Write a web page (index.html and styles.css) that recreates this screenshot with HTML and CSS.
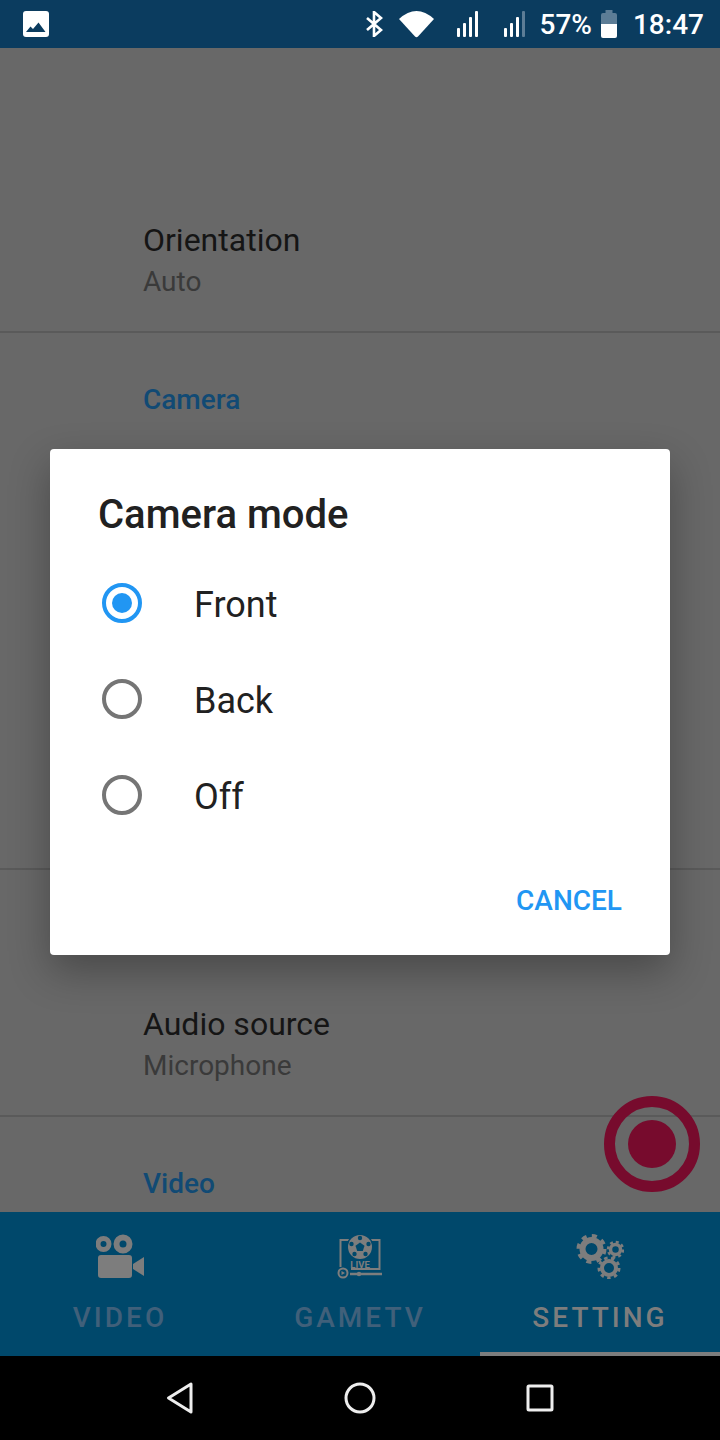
FILE: index.html
```html
<!DOCTYPE html>
<html lang="en">
<head>
  <meta charset="UTF-8" />
  <meta name="viewport" content="width=device-width, initial-scale=1" />
  <title>Settings - Camera mode</title>
  <link rel="stylesheet" href="styles.css">
</head>
<body>
  <div class="status-bar">
    <svg class="st-image" width="26" height="26" viewBox="0 0 26 26">
      <rect width="26" height="26" rx="3" fill="#fff" />
      <path d="M3 21 L7.500 15.500 L10 18 L15.500 11.500 L22.500 21 Z" fill="#0b3c5f" />
    </svg>
    <div class="st-right">
      <svg class="st-bt" width="17" height="26" viewBox="0 0 17 26">
        <path d="M1 7 L15 19 L8 25 V1 L15 7 L1 19" fill="none" stroke="#fff" stroke-width="2.600" />
      </svg>
      <svg class="st-wifi" width="35" height="27" viewBox="0 0 35 27">
        <path d="M0 8 Q17.500 -8 35 8 L19 25.500 Q17.500 27 16 25.500 Z" fill="#fff" />
      </svg>
      <svg class="st-signal" width="21" height="26" viewBox="0 0 21 26">
        <rect x="0" y="17" width="3" height="9" rx="1" fill="#fff" />
        <rect x="6" y="12" width="3" height="14" rx="1" fill="#fff" />
        <rect x="12" y="6" width="3" height="20" rx="1" fill="#fff" />
        <rect x="18" y="0" width="3" height="26" rx="1" fill="#fff" />
      </svg>
      <svg class="st-signal st-signal-2" width="21" height="26" viewBox="0 0 21 26">
        <rect x="0" y="17" width="3" height="9" rx="1" fill="#fff" />
        <rect x="6" y="12" width="3" height="14" rx="1" fill="#fff" />
        <rect x="12" y="6" width="3" height="20" rx="1" fill="#fff" />
        <rect x="18" y="0" width="3" height="26" rx="1" fill="#5d7d96" />
      </svg>
      <span class="st-text st-pct">57%</span>
      <svg class="st-battery" width="16" height="28" viewBox="0 0 16 28">
        <path d="M0 5 Q0 3 2 3 H4.500 V0 H11.500 V3 H14 Q16 3 16 5 V14 H0 Z" fill="#5d7d96" />
        <path d="M0 14 H16 V26 Q16 28 14 28 H2 Q0 28 0 26 Z" fill="#fff" />
      </svg>
      <span class="st-text st-time">18:47</span>
    </div>
  </div>

  <div class="settings">
    <div class="row">
      <div class="row-title">Orientation</div>
      <div class="row-sub">Auto</div>
    </div>
    <div class="section">
      <div class="section-title">Camera</div>
      <div class="row"></div>
      <div class="row"></div>
      <div class="row"></div>
    </div>
    <div class="section">
      <div class="section-title"></div>
      <div class="row">
        <div class="row-title">Audio source</div>
        <div class="row-sub">Microphone</div>
      </div>
    </div>
    <div class="section">
      <div class="section-title">Video</div>
    </div>
  </div>

  <svg class="fab" width="96" height="96" viewBox="0 0 96 96">
    <circle cx="48" cy="48" r="42.500" fill="none" stroke="#770b2d" stroke-width="11" />
    <circle cx="48" cy="48" r="24" fill="#770b2d" />
  </svg>

  <div class="tabs">
    <div class="tab">
      <svg class="tab-icon" width="48" height="46" viewBox="0 0 48 46">
        <circle cx="7.500" cy="11" r="5.500" fill="none" stroke="#7d7d7d" stroke-width="5" />
        <circle cx="27" cy="11" r="6.500" fill="none" stroke="#7d7d7d" stroke-width="6" />
        <rect x="2" y="22" width="34" height="23" rx="3" fill="#7d7d7d" />
        <path d="M37 31 L48 24 V43 L37 36 Z" fill="#7d7d7d" />
      </svg>
      <div class="tab-label">VIDEO</div>
    </div>
    <div class="tab">
      <svg class="tab-icon" width="46" height="46" viewBox="0 0 46 46">
        <path d="M3.500 34 V7 H42.500 V36 H14" fill="none" stroke="#7d7d7d" stroke-width="2" />
        <circle cx="23" cy="14" r="13.500" fill="#00486b" />
        <circle cx="23" cy="14" r="12" fill="#7d7d7d" />
        <path d="M23 9.500 L27.500 12.800 L25.800 18 H20.200 L18.500 12.800 Z" fill="#00486b" />
        <circle cx="23" cy="5" r="2.200" fill="#00486b" />
        <circle cx="31.500" cy="11" r="2.200" fill="#00486b" />
        <circle cx="14.500" cy="11" r="2.200" fill="#00486b" />
        <circle cx="28.500" cy="21" r="2.200" fill="#00486b" />
        <circle cx="17.500" cy="21" r="2.200" fill="#00486b" />
        <text class="live-text" x="23" y="35" text-anchor="middle">LIVE</text>
        <circle cx="6" cy="40" r="4.500" fill="#00486b" stroke="#7d7d7d" stroke-width="2" />
        <path d="M4.500 38 L8 40 L4.500 42 Z" fill="#7d7d7d" />
        <path d="M13 41 H45" stroke="#7d7d7d" stroke-width="2.500" />
        <circle cx="22" cy="41" r="2.200" fill="#7d7d7d" />
      </svg>
      <div class="tab-label">GAMETV</div>
    </div>
    <div class="tab tab-active">
      <svg class="tab-icon" width="48" height="46" viewBox="0 0 48 46">
        <circle cx="15.500" cy="16" r="9" fill="none" stroke="#7d7d7d" stroke-width="6" />
        <circle cx="15.500" cy="16" r="13" fill="none" stroke="#7d7d7d" stroke-width="4" stroke-dasharray="5 5.200" />
        <circle cx="39.500" cy="16.500" r="5" fill="none" stroke="#7d7d7d" stroke-width="3.500" />
        <circle cx="39.500" cy="16.500" r="7.500" fill="none" stroke="#7d7d7d" stroke-width="2.500" stroke-dasharray="3 2.900" />
        <circle cx="33" cy="35" r="7" fill="none" stroke="#7d7d7d" stroke-width="4" />
        <circle cx="33" cy="35" r="10" fill="none" stroke="#7d7d7d" stroke-width="3" stroke-dasharray="3.500 3.480" />
      </svg>
      <div class="tab-label">SETTING</div>
    </div>
  </div>

  <div class="nav-bar">
    <svg width="28" height="32" viewBox="0 0 28 32">
      <path d="M2.500 16 L25 2 V30 Z" fill="none" stroke="#eee" stroke-width="3" stroke-linejoin="round" />
    </svg>
    <svg width="32" height="32" viewBox="0 0 32 32">
      <circle cx="16" cy="16" r="14" fill="none" stroke="#eee" stroke-width="3" />
    </svg>
    <svg width="28" height="28" viewBox="0 0 28 28">
      <rect x="2" y="2" width="24" height="24" rx="1" fill="none" stroke="#eee" stroke-width="3" />
    </svg>
  </div>

  <div class="dialog">
    <div class="dialog-title">Camera mode</div>
    <div class="option">
      <span class="radio radio-on"></span>
      <span class="option-label">Front</span>
    </div>
    <div class="option">
      <span class="radio"></span>
      <span class="option-label">Back</span>
    </div>
    <div class="option">
      <span class="radio"></span>
      <span class="option-label">Off</span>
    </div>
    <div class="dialog-actions">
      <span class="btn-cancel">CANCEL</span>
    </div>
  </div>
</body>
</html>
```

FILE: styles.css
```css
body {
  margin: 0;
  width: 720px;
  height: 1440px;
  position: relative;
  overflow: hidden;
  display: flex;
  flex-direction: column;
  font-family: Roboto, sans-serif;
  background-color: #686868;
}

svg {
  display: block;
}

/* status bar */
.status-bar {
  height: 48px;
  flex: none;
  display: flex;
  align-items: center;
  justify-content: space-between;
  padding: 0 16px 0 23px;
  background-color: #0b3c5f;
}

.st-right {
  display: flex;
  align-items: center;
}

.st-wifi {
  margin-left: 16px;
}

.st-signal {
  margin-left: 23px;
}

.st-signal-2 {
  margin-left: 26px;
}

.st-text {
  color: #fff;
  font-size: 28px;
  font-weight: 500;
}

.st-pct {
  margin-left: 15px;
}

.st-battery {
  margin-left: 9px;
}

.st-time {
  margin-left: 16px;
}

/* settings list */
.settings {
  flex: 1;
  min-height: 0;
  overflow: hidden;
  padding-top: 140px;
}

.row {
  height: 145px;
  box-sizing: border-box;
  padding: 34px 0 0 143px;
}

.row-title {
  font-size: 32px;
  line-height: 36px;
  color: #151515;
}

.row-sub {
  font-size: 28px;
  line-height: 36px;
  margin-top: 6px;
  color: #3a3a3a;
}

.section {
  border-top: 2px solid #5a5a5a;
  margin-top: -2px;
}

.section-title {
  height: 102px;
  box-sizing: border-box;
  padding: 50px 0 0 143px;
  font-size: 28px;
  line-height: 34px;
  font-weight: 500;
  color: #114a74;
}

/* bottom tabs */
.tabs {
  height: 144px;
  flex: none;
  display: flex;
  background-color: #00486b;
}

.tab {
  flex: 1;
  box-sizing: border-box;
  display: flex;
  flex-direction: column;
  align-items: center;
  padding-top: 21px;
  color: #40607a;
}

.tab-label {
  margin-top: 22px;
  font-size: 28px;
  line-height: 34px;
  font-weight: 500;
  letter-spacing: 3px;
}

.tab-active {
  color: #7d7d7d;
  border-bottom: 4px solid #7d7d7d;
}

.live-text {
  font-family: Roboto, sans-serif;
  font-size: 9.500px;
  font-weight: 700;
  fill: #7d7d7d;
}

.nav-bar {
  height: 84px;
  flex: none;
  display: grid;
  grid-template-columns: repeat(3, 180px);
  justify-content: center;
  justify-items: center;
  align-items: center;
  background-color: #000;
}

/* floating record button */
.fab {
  position: absolute;
  left: 604px;
  top: 1096px;
}

/* dialog */
.dialog {
  position: absolute;
  left: 50px;
  top: 449px;
  width: 620px;
  height: 506px;
  box-sizing: border-box;
  padding: 41px 48px 0;
  background-color: #fff;
  border-radius: 4px;
  box-shadow: 0 16px 40px rgba(0, 0, 0, 0.3);
}

.dialog-title {
  font-size: 40px;
  line-height: 50px;
  font-weight: 500;
  color: #212121;
  margin-bottom: 15px;
}

.option {
  height: 96px;
  display: flex;
  align-items: center;
  gap: 52px;
  padding-left: 4px;
}

.radio {
  width: 40px;
  height: 40px;
  box-sizing: border-box;
  border: 4px solid #757575;
  border-radius: 50%;
  padding: 6px;
}

.radio-on {
  border-color: #2196f3;
}

.radio-on::before {
  content: "";
  display: block;
  width: 20px;
  height: 20px;
  border-radius: 50%;
  background-color: #2196f3;
}

.option-label {
  font-size: 36px;
  padding-top: 4px;
  color: #212121;
}

.dialog-actions {
  display: flex;
  justify-content: flex-end;
  margin-top: 41px;
}

.btn-cancel {
  font-size: 28px;
  line-height: 34px;
  font-weight: 500;
  color: #2196f3;
}
```
